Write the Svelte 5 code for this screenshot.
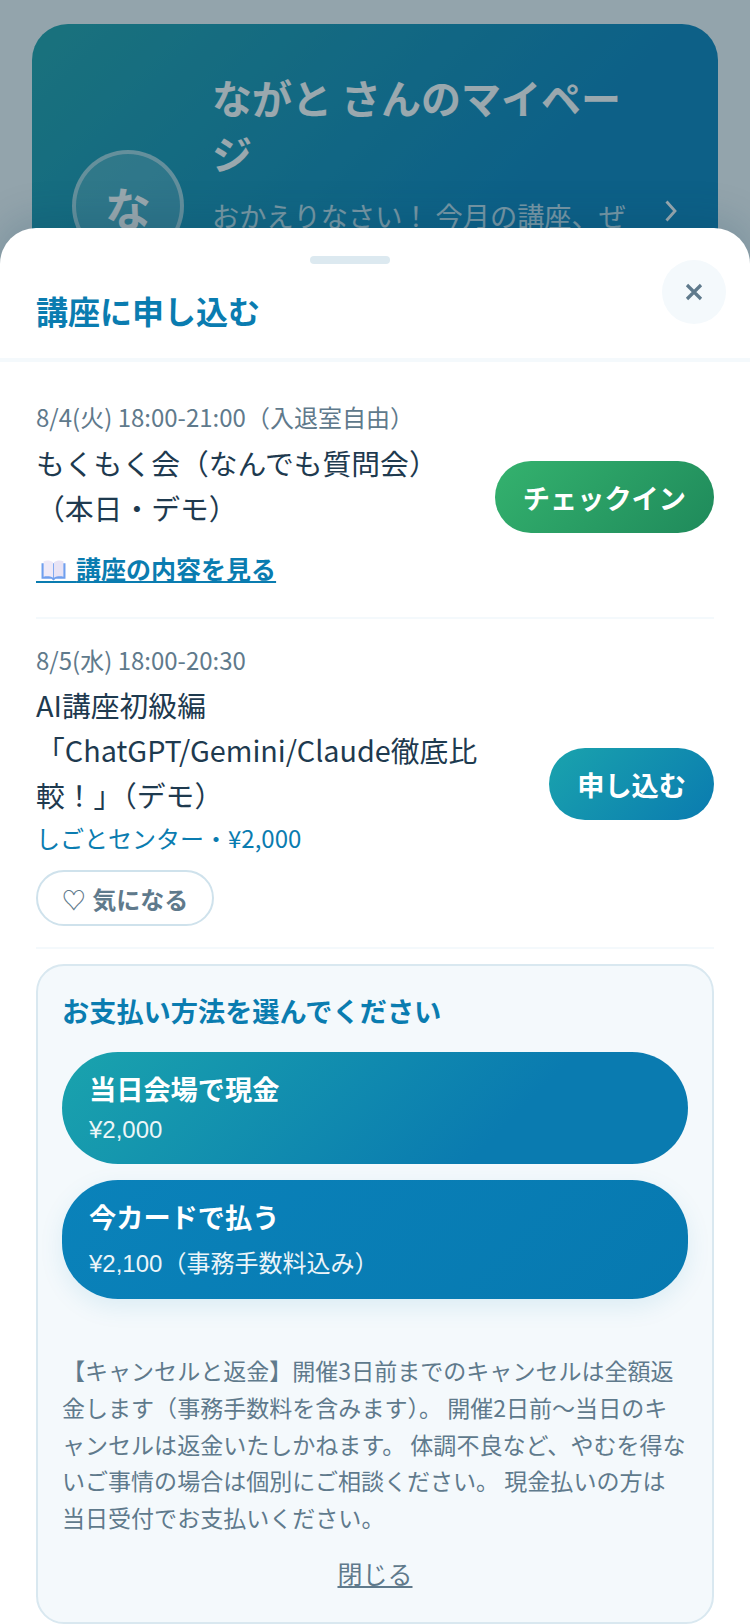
<script>
  const schedule = [
    {
      id: 1,
      date: '8/4(火) 18:00-21:00（入退室自由）',
      title: 'もくもく会（なんでも質問会）（本日・デモ）',
      action: 'チェックイン',
      kind: 'green'
    },
    {
      id: 2,
      date: '8/5(水) 18:00-20:30',
      title: 'AI講座初級編「ChatGPT/Gemini/Claude徹底比較！」（デモ）',
      action: '申し込む',
      kind: 'teal'
    }
  ];
</script>

<div class="page">
  <section class="hero">
    <div class="avatar">な</div>
    <div class="hero-text">
      <h2>ながと さんのマイページ</h2>
      <p>おかえりなさい！ 今月の講座、ぜひご覧ください</p>
    </div>
    <svg class="chev" viewBox="0 0 14 24" width="14" height="24" aria-hidden="true"><path d="M2.5 2.5 L11 12 L2.5 21.5" fill="none" stroke="#fff" stroke-width="2.8" /></svg>
  </section>

  <div class="overlay"></div>

  <div class="sheet">
    <header class="sheet-head">
      <div class="handle"></div>
      <h1>講座に申し込む</h1>
      <button class="close" aria-label="閉じる">
        <svg viewBox="0 0 18 18" width="18" height="18" aria-hidden="true"><path d="M2 2 L16 16 M16 2 L2 16" stroke="#5f7a8c" stroke-width="3.2" fill="none" /></svg>
      </button>
    </header>

    <div class="body">
      {#each schedule as item (item.id)}
        <article class="row">
          <div class="info">
            <div class="date">{item.date}</div>
            <div class="title">{item.title}</div>
            {#if item.id === 1}
              <a class="more" href="#top">
                <svg class="book" viewBox="0 0 24 20" width="25" height="21" aria-hidden="true">
                  <path d="M0.5 3 H23.5 V18 H14 L12 19.5 L10 18 H0.5 Z" fill="#6f9fee" />
                  <path d="M2.5 1 C6 0 9 0.4 11.6 2 V17 C9 15.6 6 15.2 2.5 16 Z" fill="#efeaf8" />
                  <path d="M21.5 1 C18 0 15 0.4 12.4 2 V17 C15 15.6 18 15.2 21.5 16 Z" fill="#e8e3f5" />
                </svg>
                <span class="book-gap">&nbsp;</span>講座の内容を見る
              </a>
            {:else}
              <div class="venue">しごとセンター・¥2,000</div>
              <button class="like">♡ 気になる</button>
            {/if}
          </div>
          <button class="act {item.kind}">{item.action}</button>
        </article>
      {/each}

      <section class="pay">
        <h3>お支払い方法を選んでください</h3>
        <button class="opt opt-cash">
          <strong>当日会場で現金</strong>
          <span>¥2,000</span>
        </button>
        <button class="opt opt-card">
          <strong>今カードで払う</strong>
          <span>¥2,100（事務手数料込み）</span>
        </button>
        <p class="note">【キャンセルと返金】開催3日前までのキャンセルは全額返金します（事務手数料を含みます）。 開催2日前〜当日のキャンセルは返金いたしかねます。 体調不良など、やむを得ないご事情の場合は個別にご相談ください。 現金払いの方は当日受付でお支払いください。</p>
        <button class="dismiss">閉じる</button>
      </section>
    </div>
  </div>
</div>

<style>
  :global(body) {
    margin: 0;
    background: #f4f9fc;
  }
  .page {
    position: relative;
    width: 750px;
    height: 1624px;
    overflow: hidden;
    background: #f4f9fc;
    font-family: "Noto Sans CJK JP", "Noto Sans", sans-serif;
    color: #1e3a4f;
  }
  .hero {
    margin: 24px 32px 0;
    height: 400px;
    box-sizing: border-box;
    padding: 45px 40px;
    border-radius: 36px;
    background: linear-gradient(135deg, #2aa5ad, #1488bf 60%);
    display: flex;
    align-items: flex-start;
    gap: 28px;
    color: #fff;
  }
  .avatar {
    flex: none;
    width: 112px;
    height: 112px;
    margin-top: 81px;
    box-sizing: border-box;
    border: 4px solid rgba(255, 255, 255, 0.5);
    background: rgba(255, 255, 255, 0.2);
    border-radius: 50%;
    display: flex;
    align-items: center;
    justify-content: center;
    font-size: 46px;
    font-weight: 700;
  }
  .hero-text {
    flex: 1;
    min-width: 0;
  }
  .hero-text h2 {
    margin: 0;
    font-size: 40px;
    line-height: 56px;
    font-weight: 700;
  }
  .hero-text p {
    margin: 13px 0 0;
    font-size: 27.2px;
    line-height: 42px;
    opacity: 0.75;
  }
  .chev {
    flex: none;
    margin-top: 130px;
  }
  .overlay {
    position: absolute;
    inset: 0;
    background: rgba(2, 37, 52, 0.4);
  }
  .sheet {
    position: absolute;
    left: 0;
    right: 0;
    top: 228px;
    bottom: 0;
    background: #fff;
    border-radius: 36px 36px 0 0;
    box-shadow: 0 -8px 40px rgba(10, 60, 90, 0.18);
    overflow: hidden;
  }
  .sheet-head {
    position: relative;
    height: 130px;
    border-bottom: 4px solid #f4f9fc;
  }
  .handle {
    position: absolute;
    left: 310px;
    top: 28px;
    width: 80px;
    height: 8px;
    border-radius: 4px;
    background: #dce9f0;
  }
  .sheet-head h1 {
    margin: 0;
    padding: 65px 0 0 36px;
    font-size: 32px;
    line-height: 40px;
    font-weight: 700;
    font-family: "Liberation Sans", "Noto Sans CJK JP", sans-serif;
    color: #0a7cb0;
  }
  .close {
    position: absolute;
    left: 662px;
    top: 32px;
    width: 64px;
    height: 64px;
    border: 0;
    padding: 0;
    border-radius: 50%;
    background: #f4f9fc;
    display: flex;
    align-items: center;
    justify-content: center;
  }
  .body {
    padding: 14px 36px 0;
  }
  .row {
    display: flex;
    align-items: center;
    gap: 50px;
    padding: 23px 0 21px;
    border-bottom: 2px solid #f4f9fc;
  }
  .info {
    flex: 1;
    min-width: 0;
  }
  .date {
    font-size: 24px;
    line-height: 36px;
    color: #5f7a8c;
  }
  .title {
    margin-top: 4.5px;
    font-size: 28.8px;
    line-height: 45px;
    color: #1e3a4f;
  }
  .act {
    flex: none;
    height: 72px;
    padding: 0 28px;
    border: 0;
    border-radius: 36px;
    color: #fff;
    font-size: 27.2px;
    font-weight: 700;
    font-family: "Liberation Sans", "Noto Sans CJK JP", sans-serif;
  }
  .green {
    background: linear-gradient(135deg, #34b26e, #1f8a5b);
  }
  .teal {
    background: linear-gradient(135deg, #1aa3ad, #0a7bb0);
  }
  .more {
    position: relative;
    display: inline-block;
    margin: 18px 0 8px;
    font-size: 25px;
    line-height: 40px;
    font-weight: 700;
    color: #0a7cb0;
    text-decoration: underline;
  }
  .book-gap {
    letter-spacing: 34.4px;
  }
  .book {
    position: absolute;
    left: 5px;
    top: 12px;
  }
  .venue {
    margin-top: 3px;
    font-size: 24px;
    line-height: 36px;
    color: #0a7cb0;
  }
  .like {
    display: block;
    margin-top: 14px;
    width: 178px;
    height: 56px;
    padding: 0;
    background: #fff;
    border: 2px solid #cfe2ec;
    border-radius: 28px;
    font-size: 24px;
    font-weight: 700;
    color: #5f7a8c;
    font-family: "Liberation Sans", "Noto Sans CJK JP", sans-serif;
  }
  .pay {
    margin-top: 15px;
    box-sizing: border-box;
    height: 660px;
    padding: 27px 24px;
    background: #f4f9fc;
    border: 2px solid #d9e8f0;
    border-radius: 28px;
  }
  .pay h3 {
    margin: 0 0 19px;
    font-size: 27.2px;
    line-height: 40px;
    font-weight: 700;
    color: #0a7cb0;
    font-family: "Liberation Sans", "Noto Sans CJK JP", sans-serif;
  }
  .opt {
    display: flex;
    flex-direction: column;
    align-items: flex-start;
    gap: 8px;
    width: 100%;
    box-sizing: border-box;
    padding: 16px 27px 20px;
    border: 0;
    border-radius: 56px;
    color: #fff;
    font-family: "Liberation Sans", "Noto Sans CJK JP", sans-serif;
  }
  .opt strong {
    font-size: 27.2px;
  }
  .opt span {
    font-size: 24px;
    opacity: 0.92;
  }
  .opt-cash {
    background: linear-gradient(135deg, #1aa3ad, #0a7bb0 70%);
  }
  .opt-card {
    margin-top: 16px;
    background: linear-gradient(135deg, #0a82ba, #0779b0);
    box-shadow: 0 8px 24px rgba(10, 124, 176, 0.1);
  }
  .note {
    margin: 53px 0 0;
    font-size: 23.04px;
    line-height: 36.8px;
    color: #5f7a8c;
  }
  .dismiss {
    display: block;
    margin: 21px auto 0;
    padding: 0;
    border: 0;
    background: none;
    font-size: 25px;
    line-height: 36px;
    color: #5f7a8c;
    text-decoration: underline;
    font-family: "Liberation Sans", "Noto Sans CJK JP", sans-serif;
  }
</style>
